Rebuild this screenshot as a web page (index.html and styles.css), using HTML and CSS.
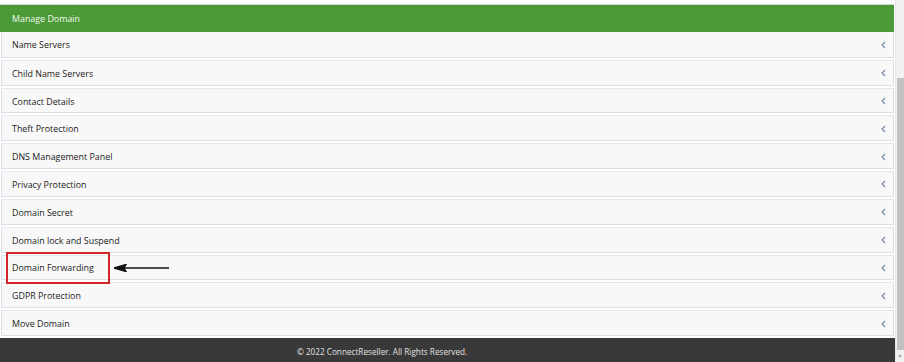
FILE: index.html
```html
<!DOCTYPE html>
<html lang="en">
  <head>
    <meta charset="UTF-8" />
    <meta name="viewport" content="width=device-width, initial-scale=1.0" />
    <title>Manage Domain</title>
    <link rel="stylesheet" href="styles.css">
  </head>
  <body>
    <div class="layout">
      <div class="main">
        <!-- =========== manage domain panel ========= -->
        <div class="panel">
          <div class="panel-head">Manage Domain</div>
          <ul class="menu">
            <li><span>Name Servers</span><svg class="chev" viewBox="0 0 5 8"><polyline points="4,1 1,4 4,7" /></svg></li>
            <li><span>Child Name Servers</span><svg class="chev" viewBox="0 0 5 8"><polyline points="4,1 1,4 4,7" /></svg></li>
            <li><span>Contact Details</span><svg class="chev" viewBox="0 0 5 8"><polyline points="4,1 1,4 4,7" /></svg></li>
            <li><span>Theft Protection</span><svg class="chev" viewBox="0 0 5 8"><polyline points="4,1 1,4 4,7" /></svg></li>
            <li><span>DNS Management Panel</span><svg class="chev" viewBox="0 0 5 8"><polyline points="4,1 1,4 4,7" /></svg></li>
            <li><span>Privacy Protection</span><svg class="chev" viewBox="0 0 5 8"><polyline points="4,1 1,4 4,7" /></svg></li>
            <li><span>Domain Secret</span><svg class="chev" viewBox="0 0 5 8"><polyline points="4,1 1,4 4,7" /></svg></li>
            <li><span>Domain lock and Suspend</span><svg class="chev" viewBox="0 0 5 8"><polyline points="4,1 1,4 4,7" /></svg></li>
            <li class="marked">
              <span>Domain Forwarding</span>
              <span class="mark-box"></span>
              <svg class="mark-arrow" viewBox="0 0 56 8">
                <line x1="8" y1="4" x2="55" y2="4" />
                <polygon points="0,4 12,0.5 10,4 12,7.5" />
              </svg>
              <svg class="chev" viewBox="0 0 5 8"><polyline points="4,1 1,4 4,7" /></svg>
            </li>
            <li><span>GDPR Protection</span><svg class="chev" viewBox="0 0 5 8"><polyline points="4,1 1,4 4,7" /></svg></li>
            <li><span>Move Domain</span><svg class="chev" viewBox="0 0 5 8"><polyline points="4,1 1,4 4,7" /></svg></li>
          </ul>
        </div>
        <!-- =========== footer ========= -->
        <footer class="footer">&copy; 2022 ConnectReseller. All Rights Reserved.</footer>
      </div>
      <div class="scrollbar">
        <div class="thumb"></div>
        <div class="down"></div>
      </div>
    </div>
  </body>
</html>
```

FILE: styles.css
```css
* {
  margin: 0;
  padding: 0;
  box-sizing: border-box;
}

body {
  background-color: #fff;
  font-family: "Open Sans", "Liberation Sans", sans-serif;
  font-size: 8.9px;
  color: #222;
  overflow: hidden;
}

.layout {
  display: flex;
  height: 362px;
}

.main {
  flex: 1;
  display: flex;
  flex-direction: column;
  padding-top: 4px;
}

.panel-head {
  height: 28px;
  border-top: 1px solid #cfd8cf;
  background: #4b9a37;
  color: #f2f7f0;
  padding-left: 12px;
  display: flex;
  align-items: center;
  margin-right: 1px;
}

.menu {
  list-style: none;
}

.menu li {
  position: relative;
  height: 25.82px;
  margin: 0 1px 2px 1px;
  background: #f8f8f8;
  border: 1px solid #d9e0e8;
  border-top-color: #e4e8ee;
  display: flex;
  align-items: center;
  justify-content: space-between;
  padding: 1px 7px 0 10px;
}

.menu li:first-child {
  border-top: none;
}

.menu li.marked {
  z-index: 1;
}

.chev {
  width: 5px;
  height: 8px;
  fill: none;
  stroke: #7385a8;
  stroke-width: 1.1;
}

/* ============== annotation ========================== */
.mark-box {
  position: absolute;
  left: 4px;
  top: -4px;
  width: 104px;
  height: 32px;
  border: 2px solid #d0262b;
}

.mark-arrow {
  position: absolute;
  left: 112px;
  top: 8px;
  width: 56px;
  height: 8px;
  stroke: #111;
  stroke-width: 1.4;
  fill: #111;
}

.footer {
  flex: 1;
  background: #393939;
  color: #e2e2e2;
  font-size: 8.2px;
  padding: 8px 0 0 297px;
}

.scrollbar {
  width: 9px;
  background: #f1f1f1;
  position: relative;
  border-left: 1px solid #e8e8e8;
}

.thumb {
  position: absolute;
  left: 1px;
  right: 0;
  top: 78px;
  height: 272px;
  background: #c1c1c1;
}

.down {
  position: absolute;
  left: 2px;
  bottom: 4px;
  border-left: 2.5px solid transparent;
  border-right: 2.5px solid transparent;
  border-top: 3px solid #a3a3a3;
}
```
